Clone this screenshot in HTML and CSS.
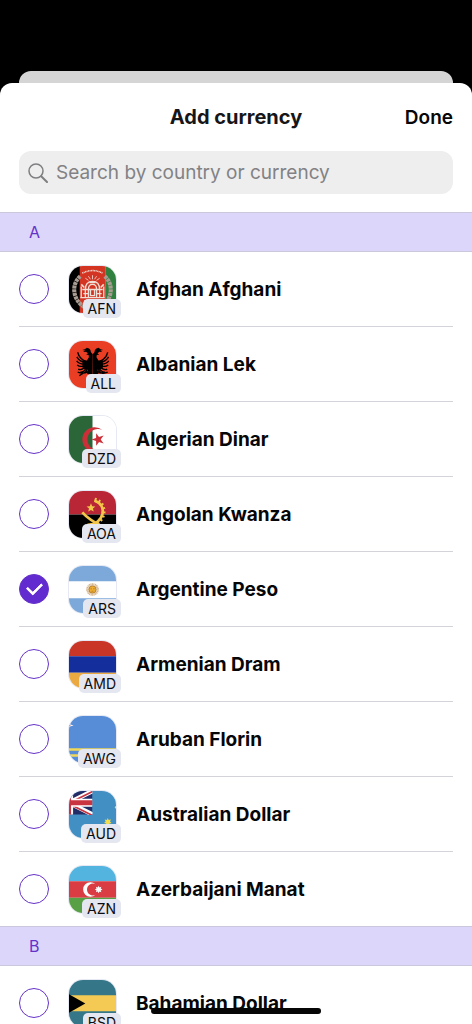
FILE: index.html
```html
<!DOCTYPE html>
<html lang="en">
  <head>
    <meta charset="UTF-8" />
    <meta name="viewport" content="width=device-width, initial-scale=1.0" />
    <title>Add currency</title>
    <link rel="stylesheet" href="styles.css" />
  </head>
  <body>
    <div class="backdrop-card"></div>
    <main class="sheet">
      <header class="sheet-header">
        <h1>Add currency</h1>
        <button class="done" type="button">Done</button>
      </header>

      <label class="search">
        <svg class="search-icon" viewBox="0 0 20 20" aria-hidden="true">
          <circle cx="8" cy="8" r="7" />
          <path class="handle" d="M13.2 13.2 19 19" />
        </svg>
        <input
          type="search"
          aria-label="Search currencies"
          placeholder="Search by country or currency"
        />
      </label>

      <div class="list">
        <section>
          <h2>A</h2>
          <ul>
            <li>
              <label class="currency">
                <input type="checkbox" name="currency" value="AFN" />
                <span class="flag">
                  <svg viewBox="0 0 46 46" aria-hidden="true">
                    <path fill="#000" d="M0 0h11v46H0z" />
                    <path fill="#d43422" d="M10.500 0H36v46H10.500z" />
                    <path fill="#30803f" d="M36 0h10v46H36z" />
                    <g fill="none" stroke="#f0dfd6">
                      <path stroke-width="4" stroke-dasharray="3 .6" stroke="#a89b92" d="M11 10C2 18 3 33 16 41M35 10c9 8 8 23-5 31" />
                      <path stroke-width="1.500" stroke-dasharray="1 .5" d="M13 7Q23 2 33 7" />
                      <path stroke-width=".8" d="M23 9v4M19 10l2 3M27 10l-2 3M16 12l3 2M30 12l-3 2" />
                      <path stroke-width="1.300" d="M12 31V20M34 31V20M16 31V23q0-8 7-8t7 8v8M19 31v-8q0-5 4-5t4 5v8M13 23h20M14 27h5M27 27h5M11 31h24M15 34h16M21 23h4v6h-4z" />
                      <path stroke-width="1.600" d="M12 18l3 3M34 18l-3 3M20 16h6" />
                    </g>
                  </svg>
                  <span class="code">AFN</span>
                </span>
                <span class="name">Afghan Afghani</span>
              </label>
            </li>
            <li>
              <label class="currency">
                <input type="checkbox" name="currency" value="ALL" />
                <span class="flag">
                  <svg viewBox="0 0 46 46" aria-hidden="true">
                    <path fill="#e93d24" d="M0 0h46v46H0z" />
                    <g id="eagle-half">
                      <path d="M23.200 13 21.500 11Q21 7 17.500 6.700L15.500 8 13 8.800l2.800.4-2 1.600 3-.3 1.700 1.700-1.700 1.300 2.400.1.300 2.400-2 3-4-.4-.5 7 2.500 2 3 .4-1 4 2.600.6.900 3.400 2 3z" />
                      <path fill="none" stroke="#000" stroke-width="1.300" d="M16 20Q10 17 8.500 11M16 21Q10 20 7.700 15.500M16 22.500Q10 23 7.500 19.500M16 24Q11 26 8 23.500M16 25.500Q12 29 9 27.500M17 26.500Q14 31 11 30.500M18 27.500Q16 31 14.500 31.500M18.500 30Q14 32.500 8.500 30.500M14 31.500 10 34M20 33l-2 3.500" />
                    </g>
                    <use href="#eagle-half" transform="matrix(-1 0 0 1 46.400 0)" />
                  </svg>
                  <span class="code">ALL</span>
                </span>
                <span class="name">Albanian Lek</span>
              </label>
            </li>
            <li>
              <label class="currency">
                <input type="checkbox" name="currency" value="DZD" />
                <span class="flag">
                  <svg viewBox="0 0 46 46" aria-hidden="true">
                    <path fill="#fff" d="M0 0h46v46H0z" />
                    <path fill="#2b6638" d="M0 0h23v46H0z" />
                    <path fill="#cc2f38" d="M33 14A12 12 0 1 0 33 32 10.200 10.200 0 1 1 33 14z" />
                    <path fill="#cc2f38" d="m22 23 4.500-1.500.1-4.700 2.800 3.800 4.500-1.400L31 23l2.900 3.800-4.500-1.400-2.800 3.800-.1-4.700z" />
                  </svg>
                  <span class="code">DZD</span>
                </span>
                <span class="name">Algerian Dinar</span>
              </label>
            </li>
            <li>
              <label class="currency">
                <input type="checkbox" name="currency" value="AOA" />
                <span class="flag">
                  <svg viewBox="0 0 46 46" aria-hidden="true">
                    <path fill="#b92736" d="M0 0h46v23H0z" />
                    <path d="M0 23h46v23H0z" />
                    <g fill="none" stroke="#f3c64a">
                      <path stroke-width="2.600" d="M25 9.500C38 13 35 33 18 33" />
                      <path stroke-width="4" stroke-dasharray="1.700 2.200" d="M25 8.500C39 12 36 34 18 34" />
                      <path stroke-width="2.600" d="M13 21Q19 28 36 37" />
                    </g>
                    <path fill="#f3c64a" d="m21.500 12 1.200 2.900 3.100.2-2.400 2 .8 3-2.700-1.600-2.700 1.600.8-3-2.400-2 3.100-.2z" />
                  </svg>
                  <span class="code">AOA</span>
                </span>
                <span class="name">Angolan Kwanza</span>
              </label>
            </li>
            <li>
              <label class="currency">
                <input type="checkbox" name="currency" value="ARS" checked />
                <span class="flag">
                  <svg viewBox="0 0 46 46" aria-hidden="true">
                    <path fill="#7da9da" d="M0 0h46v46H0z" />
                    <path fill="#fff" d="M0 15h46v16.500H0z" />
                    <circle cx="23" cy="23" r="5" fill="none" stroke="#d5b48c" stroke-width="2.400" stroke-dasharray="1 .4" />
                    <circle cx="23" cy="23" r="3.500" fill="#efae32" stroke="#a87427" stroke-width=".8" />
                    <path fill="none" stroke="#a87427" stroke-width=".7" d="M21 22.300h1.500M23.700 22.300h1.500M22 24.700h2" />
                  </svg>
                  <span class="code">ARS</span>
                </span>
                <span class="name">Argentine Peso</span>
              </label>
            </li>
            <li>
              <label class="currency">
                <input type="checkbox" name="currency" value="AMD" />
                <span class="flag">
                  <svg viewBox="0 0 46 46" aria-hidden="true">
                    <path fill="#c93627" d="M0 0h46v15H0z" />
                    <path fill="#142f9c" d="M0 15h46v16H0z" />
                    <path fill="#eba942" d="M0 31h46v15H0z" />
                  </svg>
                  <span class="code">AMD</span>
                </span>
                <span class="name">Armenian Dram</span>
              </label>
            </li>
            <li>
              <label class="currency">
                <input type="checkbox" name="currency" value="AWG" />
                <span class="flag">
                  <svg viewBox="0 0 46 46" aria-hidden="true">
                    <path fill="#568dd6" d="M0 0h46v46H0z" />
                    <path fill="#f1d857" d="M0 31.500h46V34H0zM0 37.500h46V40H0z" />
                    <path fill="#fff" d="M0 7.800 4.500 9.200 0 10.600z" />
                    <path fill="#d43422" d="m0 8.500 2 .7-2 .7z" />
                  </svg>
                  <span class="code">AWG</span>
                </span>
                <span class="name">Aruban Florin</span>
              </label>
            </li>
            <li>
              <label class="currency">
                <input type="checkbox" name="currency" value="AUD" />
                <span class="flag">
                  <svg viewBox="0 0 46 46" aria-hidden="true">
                    <path fill="#4290c3" d="M0 0h46v46H0z" />
                    <path fill="#222d68" d="M0 0h23v23H0z" />
                    <path stroke="#fff" stroke-width="4.500" d="M0 11.500 23 0M0 11.500 23 23" />
                    <path stroke="#c93440" stroke-width="1.600" d="M0 12 23 .500M0 12.500 23 24" />
                    <path fill="#fff" d="M0 0h4v23H0zM0 7.500h23v8H0z" />
                    <path fill="#c93440" d="M0 0h2v23H0zM0 9h23v5H0z" />
                    <path fill="#4290c3" d="M0 23.500h27v3H0zM23 0h3v27h-3z" />
                    <path fill="#f2dc4f" d="m38 26.500.8 2 2.300-.6-1 2 1.600 1.300-2.100.5v2.200l-1.600-1.400-1.600 1.400v-2.200l-2.100-.5 1.600-1.300-1-2 2.300.6zM46 14.500l-1.300 1.500 1.300 1.500z" />
                  </svg>
                  <span class="code">AUD</span>
                </span>
                <span class="name">Australian Dollar</span>
              </label>
            </li>
            <li>
              <label class="currency">
                <input type="checkbox" name="currency" value="AZN" />
                <span class="flag">
                  <svg viewBox="0 0 46 46" aria-hidden="true">
                    <path fill="#53b5df" d="M0 0h46v15H0z" />
                    <path fill="#da3c43" d="M0 15h46v16H0z" />
                    <path fill="#58a045" d="M0 31h46v15H0z" />
                    <path fill="#fff" d="M26 17.800A7.200 7.200 0 1 0 26 28.200 5.800 5.800 0 1 1 26 17.800z" />
                    <path fill="#fff" d="m29 19.300.9 1.700 1.800-.7-.7 1.800 1.700.9-1.700.9.7 1.800-1.800-.7-.9 1.700-.9-1.700-1.800.7.700-1.800-1.700-.9 1.700-.9-.7-1.800 1.800.7z" />
                  </svg>
                  <span class="code">AZN</span>
                </span>
                <span class="name">Azerbaijani Manat</span>
              </label>
            </li>
          </ul>
        </section>

        <section>
          <h2>B</h2>
          <ul>
            <li>
              <label class="currency">
                <input type="checkbox" name="currency" value="BSD" />
                <span class="flag">
                  <svg viewBox="0 0 46 46" aria-hidden="true">
                    <path fill="#357789" d="M0 0h46v46H0z" />
                    <path fill="#f4ca55" d="M0 15h46v15.500H0z" />
                    <path d="m0 14 16 9L0 32z" />
                  </svg>
                  <span class="code">BSD</span>
                </span>
                <span class="name">Bahamian Dollar</span>
              </label>
            </li>
          </ul>
        </section>
      </div>
    </main>
    <div class="home-indicator"></div>
  </body>
</html>
```
FILE: styles.css
```css
* {
  box-sizing: border-box;
}

html,
body {
  height: 100%;
  margin: 0;
  padding: 0;
}

body {
  display: flex;
  flex-direction: column;
  padding-top: 71px;
  overflow: hidden;
  background: #000;
  color: #060607;
  font-family: Inter, "Liberation Sans", sans-serif;
}

.backdrop-card {
  flex: none;
  height: 12px;
  margin: 0 19px;
  border-radius: 12px 12px 0 0;
  background: #d5d5d5;
}

.sheet {
  flex: 1;
  min-height: 0;
  display: flex;
  flex-direction: column;
  border-radius: 12px 12px 0 0;
  background: #fff;
}

.sheet-header {
  display: grid;
  grid-template-columns: 1fr auto 1fr;
  align-items: center;
  height: 68px;
  padding: 0 19px;
}

.sheet-header h1 {
  grid-column: 2;
  margin: 0;
  font-size: 20px;
  font-weight: 700;
  color: #161618;
}

.done {
  justify-self: end;
  padding: 0;
  border: 0;
  background: none;
  color: inherit;
  font: inherit;
  font-size: 19px;
  font-weight: 600;
}

.search {
  display: flex;
  align-items: center;
  gap: 8px;
  flex: none;
  height: 43px;
  margin: 0 19px 18px;
  padding: 0 9px;
  border-radius: 12px;
  background: #eee;
}

.search-icon {
  flex: none;
  width: 20px;
  height: 20px;
  fill: none;
  stroke: #7f7f82;
  stroke-width: 1.5;
  stroke-linecap: round;
}

.search-icon .handle {
  stroke-width: 2;
}

.search input {
  flex: 1;
  min-width: 0;
  padding: 0;
  border: 0;
  outline: 0;
  background: none;
  font: inherit;
  font-size: 19px;
}

.search input::placeholder {
  color: #828285;
}

.list {
  flex: 1;
  min-height: 0;
  overflow-y: auto;
  scrollbar-width: none;
}

.list h2 {
  height: 40px;
  margin: 0;
  padding: 0 29px;
  border: 1px solid #cbc7dc;
  border-width: 1px 0;
  background: #dcd6fa;
  color: #6532c8;
  font-size: 16px;
  font-weight: 400;
  line-height: 38px;
}

.list ul {
  margin: 0;
  padding: 0 19px;
  list-style: none;
}

.list li {
  height: 75px;
  border-bottom: 1px solid #d3d3da;
}

.list li:last-child {
  height: 74px;
  border-bottom: 0;
}

.currency {
  display: flex;
  align-items: center;
  gap: 20px;
  height: 74px;
}

.currency input {
  appearance: none;
  flex: none;
  display: grid;
  place-items: center;
  width: 30px;
  height: 30px;
  margin: 0;
  border: 1px solid #6532c8;
  border-radius: 50%;
}

.currency input:checked {
  background: #622bd0;
}

/* tick mark */
.currency input:checked::before {
  content: "";
  width: 12px;
  height: 7px;
  margin-bottom: 4px;
  border: solid #fff;
  border-width: 0 0 3px 3px;
  border-radius: 1px;
  transform: rotate(-45deg);
}

.flag {
  position: relative;
  flex: none;
  width: 47px;
  height: 47px;
}

.flag svg {
  display: block;
  width: 100%;
  height: 100%;
  border-radius: 14px;
  box-shadow: 0 0 0 1px #e6e9f3;
}

.code {
  position: absolute;
  right: -5px;
  bottom: -5px;
  padding: 0 5px;
  border-radius: 5px;
  background: #e4e6f0;
  color: #0c0c0e;
  font-size: 14px;
  line-height: 19px;
}

.name {
  font-size: 19px;
  font-weight: 700;
}

.home-indicator {
  position: fixed;
  bottom: 10px;
  left: 50%;
  width: 36%;
  height: 6px;
  border-radius: 3px;
  background: #060607;
  transform: translateX(-50%);
}
```
